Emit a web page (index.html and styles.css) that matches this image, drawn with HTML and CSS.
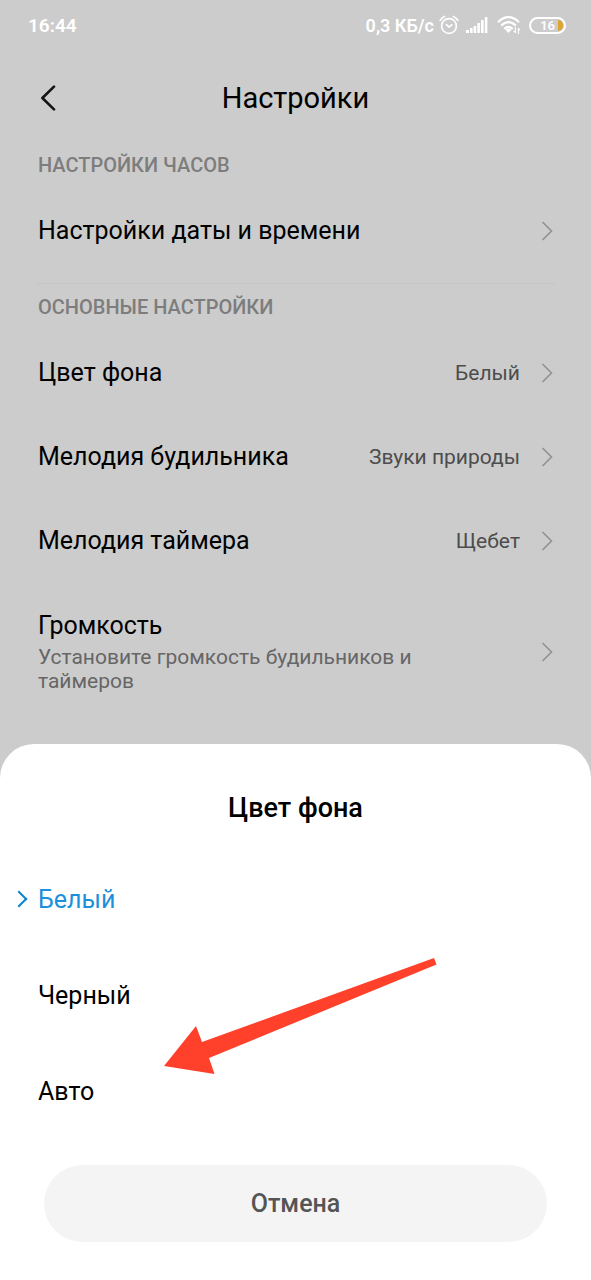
FILE: index.html
```html
<!DOCTYPE html>
<html lang="ru">
<head>
<meta charset="utf-8">
<meta name="viewport" content="width=device-width, initial-scale=1">
<title>Настройки</title>
<link rel="stylesheet" href="styles.css">
</head>
<body>
<svg class="defs" aria-hidden="true">
  <symbol id="chevron" viewBox="0 0 12 20"><path d="M1.5 1 L10.5 10 L1.5 19" fill="none" stroke="currentColor" stroke-width="1.6"/></symbol>
</svg>
<div class="screen">
  <div class="status">
    <span class="clock">16:44</span>
    <div class="indicators">
      <span class="speed">0,3 КБ/с</span>
      <svg class="alarm" viewBox="0 0 20 20" width="20" height="20" fill="none" stroke="#fff" stroke-width="1.7" stroke-linecap="round" stroke-linejoin="round" aria-hidden="true">
        <circle cx="10" cy="11" r="7.4"/><path d="M7.4 9.6 L10 12 L12.8 9.8"/><path d="M1.2 5.4 Q2.8 2.6 5.6 1.5 M18.8 5.4 Q17.2 2.6 14.4 1.5"/>
      </svg>
      <svg class="signal" viewBox="0 0 22 16" width="22" height="16" fill="#fff" aria-hidden="true">
        <rect x="0" y="13" width="3" height="3"/><rect x="4" y="11" width="2.6" height="5"/><rect x="7.6" y="9" width="2.6" height="7"/><rect x="11.3" y="6" width="2.6" height="10"/><rect x="15" y="3" width="2.6" height="13"/><rect x="18.8" y="0" width="2.6" height="16"/>
      </svg>
      <svg class="wifi" viewBox="0 0 24 18" width="24" height="18" fill="none" stroke="#fff" stroke-width="2.2" aria-hidden="true">
        <path d="M1 6.2 Q11.5 -3.8 22 6.2"/><path d="M4.2 9.6 Q11.5 2.8 18.8 9.6"/><path d="M7.3 12.8 Q11.5 9.2 15.7 12.8"/><path d="M8.4 13.8 Q11.5 11.4 14.6 13.8 L11.5 17Z" fill="#fff" stroke="none"/>
        <path d="M18.4 11 V17 M18.6 16.8 L16.8 14.8 M21.4 18 V12 M21.2 12.2 L23 14.2" stroke-width="1.1"/>
      </svg>
      <div class="battery"><span>16</span><i></i></div>
    </div>
  </div>

  <header class="header">
    <button class="back" type="button" aria-label="Назад">
      <svg viewBox="0 0 16 26" width="16" height="26" fill="none" stroke="#141414" stroke-width="2.6" stroke-linecap="round" stroke-linejoin="round" aria-hidden="true"><path d="M14 1.6 L2.4 13 L14 24.4"/></svg>
    </button>
    <h1>Настройки</h1>
  </header>

  <main>
    <section class="group">
      <h2>НАСТРОЙКИ ЧАСОВ</h2>
      <button class="row" type="button"><span class="name">Настройки даты и времени</span><svg class="chevron" aria-hidden="true"><use href="#chevron"/></svg></button>
    </section>
    <section class="group">
      <h2>ОСНОВНЫЕ НАСТРОЙКИ</h2>
      <button class="row" type="button"><span class="name">Цвет фона</span><span class="value">Белый</span><svg class="chevron" aria-hidden="true"><use href="#chevron"/></svg></button>
      <button class="row" type="button"><span class="name">Мелодия будильника</span><span class="value">Звуки природы</span><svg class="chevron" aria-hidden="true"><use href="#chevron"/></svg></button>
      <button class="row" type="button"><span class="name">Мелодия таймера</span><span class="value">Щебет</span><svg class="chevron" aria-hidden="true"><use href="#chevron"/></svg></button>
      <button class="row tall" type="button"><span class="name">Громкость<small>Установите громкость будильников и таймеров</small></span><svg class="chevron" aria-hidden="true"><use href="#chevron"/></svg></button>
    </section>
  </main>
</div>

<div class="sheet" role="dialog" aria-labelledby="sheet-title">
  <h2 id="sheet-title">Цвет фона</h2>
  <div class="options" role="radiogroup" aria-labelledby="sheet-title">
    <label class="option"><input type="radio" name="color" checked><span>Белый</span></label>
    <label class="option"><input type="radio" name="color"><span>Черный</span></label>
    <label class="option"><input type="radio" name="color"><span>Авто</span></label>
  </div>
  <button class="cancel" type="button">Отмена</button>
  <svg class="pointer" viewBox="0 0 272 117" width="272" height="117" aria-hidden="true"><path d="M0 108 L32 68 L38 84 L270 0 L272.500 6.500 L45 100 L50.500 116Z" fill="#ff412b"/></svg>
</div>
</body>
</html>
```
FILE: styles.css
```css
* { box-sizing: border-box; }

body {
  margin: 0;
  min-height: 100vh;
  background: #ccc;
  color: #000;
  font-family: Roboto, "Noto Sans", sans-serif;
}

h1, h2 { margin: 0; font-weight: 400; }

button {
  border: 0;
  background: none;
  color: inherit;
  font: inherit;
  text-align: left;
}

.defs { display: none; }

/* Status bar */
.status {
  display: flex;
  align-items: center;
  justify-content: space-between;
  height: 50px;
  padding: 0 25px 0 28px;
  color: #fff;
  font-weight: 600;
}
.clock { font-size: 19px; }
.indicators { display: flex; align-items: center; }
.speed { margin-right: 5px; font-size: 18px; }
.signal { margin-left: 7px; }
.wifi { margin-left: 9px; }
.battery {
  display: flex;
  align-items: center;
  justify-content: flex-end;
  gap: 3px;
  width: 37px;
  height: 17px;
  margin-left: 8px;
  padding-right: 1px;
  border: 2px solid #fff;
  border-radius: 9px;
  font-size: 13px;
  line-height: 13px;
}
.battery i {
  width: 5px;
  height: 11px;
  border-radius: 0 6px 6px 0;
  background: #dda52f;
}

/* Header */
.header {
  display: grid;
  grid-template-columns: 60px 1fr 60px;
  align-items: center;
  height: 95px;
  padding: 0 24px;
}
.back { display: flex; padding: 8px 16px; }
.header h1 {
  font-size: 29px;
  line-height: 40px;
  text-align: center;
}

/* Settings list */
main { padding: 0 36px; }
.group { padding: 6px 0 10px; }
.group + .group {
  padding-top: 9px;
  border-top: 1px solid #c6c6c6;
}
.group h2 {
  margin-bottom: 10px;
  padding: 0 2px;
  color: #7d7d7d;
  font-size: 20px;
  line-height: 28px;
  font-weight: 500;
}
.row {
  display: flex;
  align-items: center;
  width: 100%;
  min-height: 84px;
  padding: 0 2px;
}
.name {
  flex: 1;
  font-size: 25px;
  line-height: 30px;
}
.value { color: #4d4d4d; font-size: 21px; }
.chevron {
  width: 12px;
  height: 20px;
  margin-left: 21px;
  color: #919191;
}
.row.tall { min-height: 138px; }
.name small {
  display: block;
  max-width: 400px;
  margin-top: 4px;
  color: #666;
  font-size: 21px;
  line-height: 24px;
}

/* Bottom sheet */
.sheet {
  position: fixed;
  right: 0;
  bottom: 0;
  left: 0;
  padding: 44px 0 38px;
  border-radius: 34px 34px 0 0;
  background: #fff;
}
.sheet h2 {
  margin-bottom: 23px;
  font-size: 27px;
  line-height: 40px;
  font-weight: 500;
  text-align: center;
}
.option {
  display: grid;
  grid-template-columns: 10px 1fr;
  align-items: center;
  gap: 12px;
  height: 96px;
  padding: 0 16px;
  font-size: 25px;
}
.option input {
  width: 12px;
  height: 12px;
  margin: 0;
  appearance: none;
}
.option input:checked {
  border: solid #0d84cf;
  border-width: 2px 2px 0 0;
  transform: translateX(-3px) rotate(45deg);
}
.option input:checked + span { color: #1c90da; }
.cancel {
  display: block;
  width: calc(100% - 88px);
  height: 77px;
  margin: 26px auto 0;
  border-radius: 39px;
  background: #f4f4f4;
  color: #555;
  font-size: 25px;
  font-weight: 500;
  text-align: center;
}

/* Arrow drawn over the options */
.pointer {
  position: absolute;
  top: 214px;
  left: 164px;
  overflow: visible;
  pointer-events: none;
}
```
